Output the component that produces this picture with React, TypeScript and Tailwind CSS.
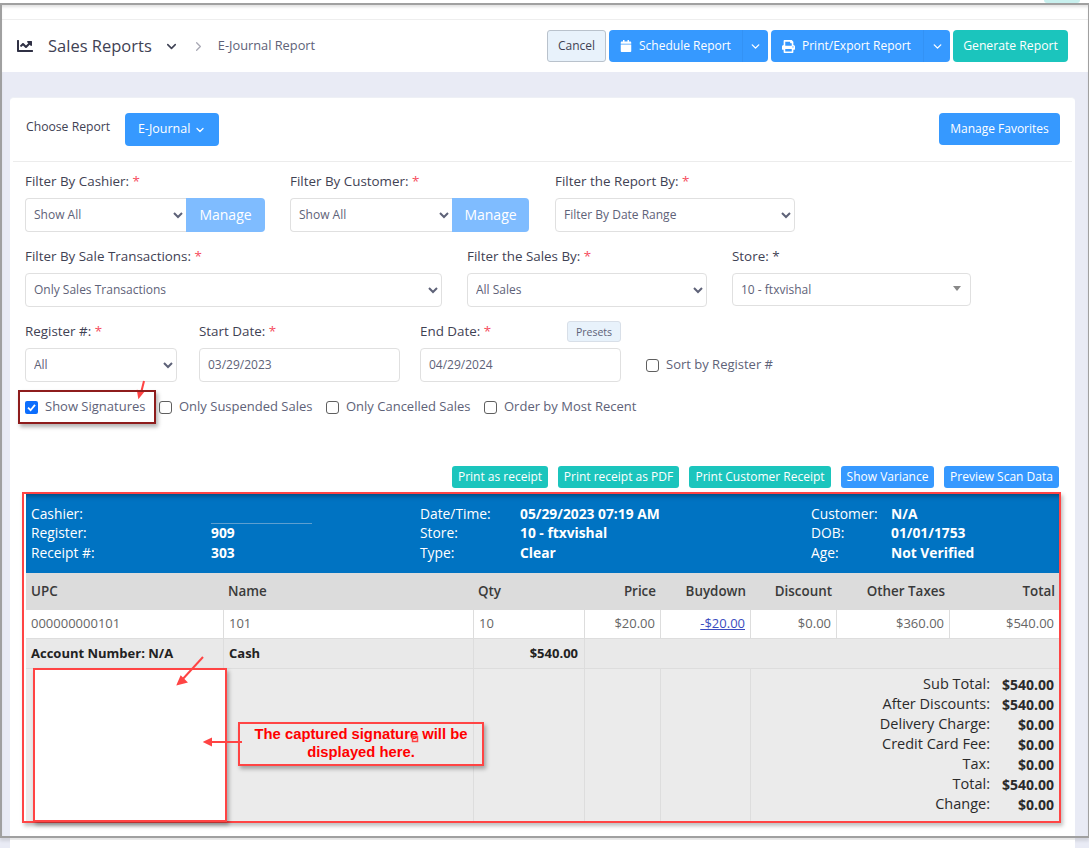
import React from "react";
import { FaChartLine, FaCalendar, FaPrint } from "react-icons/fa";
import { ChevronDown, ChevronRight } from "lucide-react";

const Req = () => <span className="text-[#f64e60]"> *</span>;

function Field({ label, required = true, className = "", children }: { label: string; required?: boolean; className?: string; children: React.ReactNode }) {
  return (
    <div className={className}>
      <div className="h-[18px] mb-[7px] text-[13.4px] leading-[16px] text-[#3f4254]">
        {label}
        {required ? <Req /> : <span> *</span>}
      </div>
      {children}
    </div>
  );
}

function Sel({ value, className = "" }: { value: string; className?: string }) {
  return (
    <select
      defaultValue={value}
      className={"h-[34px] pl-[4px] pb-[2px] border border-[#e0e0e0] bg-white text-[12px] text-[#5e6278] outline-none rounded-[4px] " + className}
    >
      <option>{value}</option>
    </select>
  );
}

function Check({ label, checked = false, className = "" }: { label: string; checked?: boolean; className?: string }) {
  return (
    <label className={"flex items-center gap-[7px] h-5 text-[13px] text-[#5e6278] " + className}>
      {checked ? (
        <span className="w-[13px] h-[13px] rounded-[2px] bg-[#0d6efd] flex items-center justify-center">
          <svg viewBox="0 0 12 12" className="w-[11px] h-[11px]">
            <path d="M2.2 6.2 L5 9 L9.8 3.2" fill="none" stroke="#fff" strokeWidth="2" />
          </svg>
        </span>
      ) : (
        <span className="w-[13px] h-[13px] rounded-[3px] bg-white border border-[#5f5f5f]" />
      )}
      {label}
    </label>
  );
}

function ActionBtn({ label, color, className }: { label: string; color: "teal" | "blue"; className: string }) {
  return (
    <div className={(color === "teal" ? "bg-[#1bc5bd] " : "bg-[#3699ff] ") + "h-[22px] rounded-[3px] flex items-center justify-center text-white text-[12px] " + className}>
      {label}
    </div>
  );
}

function SplitBtn({ icon, label, w, textW }: { icon: React.ReactNode; label: string; w: string; textW: string }) {
  return (
    <div className={"h-8 rounded-[4px] bg-[#3699ff] text-white flex items-center text-[12px] " + w}>
      <div className={"flex items-center gap-[7px] pl-[11px] " + textW}>
        {icon}
        <span>{label}</span>
      </div>
      <div className="flex-1 h-full border-l border-[#3392f5] flex items-center justify-center">
        <ChevronDown size={13} strokeWidth={2.5} />
      </div>
    </div>
  );
}

function InfoCol({ rows, className, keyW }: { rows: [string, string][]; className: string; keyW: string }) {
  return (
    <div className={"flex flex-col " + className}>
      {rows.map(([k, v]) => (
        <div key={k} className="flex h-[19.7px] items-center text-[13.8px] text-white">
          <span className={keyW}>{k}</span>
          <span className="font-bold">{v}</span>
        </div>
      ))}
    </div>
  );
}

const cols = "grid grid-cols-[197px_250px_111px_76px_90px_86px_113px_110px]";

const totals: [string, string][] = [
  ["Sub Total:", "$540.00"],
  ["After Discounts:", "$540.00"],
  ["Delivery Charge:", "$0.00"],
  ["Credit Card Fee:", "$0.00"],
  ["Tax:", "$0.00"],
  ["Total:", "$540.00"],
  ["Change:", "$0.00"],
];

export default function App() {
  return (
    <div className="relative w-[1089px] h-[848px] overflow-hidden bg-[#e9ebf5] font-['Open_Sans',sans-serif]">
      {/* top header */}
      <div className="bg-white h-[72px]">
        <div className="h-[20px] border-b border-[#eeeeee]" />
        <div className="h-[52px] pl-[17px] pr-[21px] flex items-center">
          <FaChartLine size={16} className="text-[#2f3044]" />
          <span className="ml-[15px] text-[16.5px] text-[#3f4254]">Sales Reports</span>
          <ChevronDown size={15} strokeWidth={2.5} className="ml-[12px] text-[#3f4254]" />
          <ChevronRight size={15} strokeWidth={2} className="ml-[12px] text-[#a8a8b4]" />
          <span className="ml-[12px] text-[12.8px] text-[#5e6278]">E-Journal Report</span>
          <div className="ml-auto flex gap-[3px]">
            <div className="w-[59px] h-8 rounded-[3px] border border-[#b9c2cc] bg-[#e8f2fb] text-[#3f4254] text-[12px] flex items-center justify-center">Cancel</div>
            <SplitBtn icon={<FaCalendar size={12} />} label="Schedule Report" w="w-[159px]" textW="w-[133px]" />
            <SplitBtn icon={<FaPrint size={13} />} label="Print/Export Report" w="w-[179px]" textW="w-[152px]" />
            <div className="w-[115px] h-8 rounded-[4px] bg-[#1bc5bd] text-white text-[12.2px] flex items-center justify-center">Generate Report</div>
          </div>
        </div>
      </div>

      {/* card */}
      <div className="ml-[10px] mt-[25px] w-[1065px] h-[760px] bg-white rounded-t-[4px] border-t border-[#eef0f5] px-[15px]">
        <div className="-mx-3 px-3 h-[64px] border-b border-[#ececec] flex items-start pt-[15px]">
          <span className="ml-[1px] mt-[5px] text-[12.2px] text-[#3f4254]">Choose Report</span>
          <div className="ml-[15px] w-[94px] h-[33px] rounded-[4px] bg-[#3699ff] text-white text-[12.5px] flex items-center justify-center gap-[4px]">
            E-Journal <ChevronDown size={12} strokeWidth={2.5} />
          </div>
          <div className="ml-auto w-[121px] h-8 rounded-[4px] bg-[#3699ff] text-white text-[12px] flex items-center justify-center">Manage Favorites</div>
        </div>

        <div className="pt-[11px] flex">
          <Field label="Filter By Cashier:" className="w-[265px]">
            <div className="flex w-[240px]">
              <Sel value="Show All" className="w-[161px] rounded-r-none border-r-0" />
              <div className="w-[79px] h-[34px] pb-[1px] rounded-r-[4px] bg-[#7fbcff] text-white text-[14px] font-medium flex items-center justify-center">Manage</div>
            </div>
          </Field>
          <Field label="Filter By Customer:" className="w-[265px]">
            <div className="flex w-[239px]">
              <Sel value="Show All" className="w-[162px] rounded-r-none border-r-0" />
              <div className="w-[77px] h-[34px] pb-[1px] rounded-r-[4px] bg-[#7fbcff] text-white text-[14px] font-medium flex items-center justify-center">Manage</div>
            </div>
          </Field>
          <Field label="Filter the Report By:">
            <Sel value="Filter By Date Range" className="w-[240px]" />
          </Field>
        </div>

        <div className="mt-[16px] flex">
          <Field label="Filter By Sale Transactions:" className="w-[442px]">
            <Sel value="Only Sales Transactions" className="w-[417px]" />
          </Field>
          <Field label="Filter the Sales By:" className="w-[265px]">
            <Sel value="All Sales" className="w-[240px]" />
          </Field>
          <Field label="Store:" required={false}>
            <div className="w-[239px] h-[33px] pl-[8px] pr-[9px] border border-[#e0e0e0] rounded-[4px] text-[12px] text-[#5e6278] flex items-center justify-between">
              <span>10 - ftxvishal</span>
              <span className="w-0 h-0 -mt-[3px] border-x-[4px] border-x-transparent border-t-[5px] border-t-[#888888]" />
            </div>
          </Field>
        </div>

        <div className="mt-[16px] flex">
          <Field label="Register #:" className="w-[174px]">
            <Sel value="All" className="w-[152px]" />
          </Field>
          <Field label="Start Date:" className="w-[221px]">
            <div className="w-[201px] h-[34px] pl-[8px] pb-[1px] border border-[#e0e0e0] rounded-[4px] text-[12px] text-[#5e6278] flex items-center">03/29/2023</div>
          </Field>
          <div className="w-[226px]">
            <div className="w-[201px] h-[18px] mb-[7px] flex justify-between text-[13.4px] leading-[16px] text-[#3f4254]">
              <span>End Date:<Req /></span>
              <span className="w-[54px] h-[21px] -mt-[2px] rounded-[3px] border border-[#d8dfe8] bg-[#e8f2fb] text-[10.5px] text-[#5e6278] flex items-center justify-center">Presets</span>
            </div>
            <div className="w-[201px] h-[34px] pl-[8px] pb-[1px] border border-[#e0e0e0] rounded-[4px] text-[12px] text-[#5e6278] flex items-center">04/29/2024</div>
          </div>
          <Check label="Sort by Register #" className="mt-[32px]" />
        </div>

        <div className="mt-[15px] flex">
          <Check label="Show Signatures" checked className="w-[134px]" />
          <Check label="Only Suspended Sales" className="w-[167px]" />
          <Check label="Only Cancelled Sales" className="w-[158px]" />
          <Check label="Order by Most Recent" />
        </div>

        <div className="mt-[49px] flex">
          <ActionBtn label="Print as receipt" color="teal" className="ml-[427px] w-[96px]" />
          <ActionBtn label="Print receipt as PDF" color="teal" className="ml-[10px] w-[121px]" />
          <ActionBtn label="Print Customer Receipt" color="teal" className="ml-[10px] w-[142px]" />
          <ActionBtn label="Show Variance" color="blue" className="ml-[10px] w-[93px]" />
          <ActionBtn label="Preview Scan Data" color="blue" className="ml-[10px] w-[115px]" />
        </div>

        {/* receipt */}
        <div className="relative mt-[4px] -ml-[3px] w-[1039px] h-[331px] border-2 border-[#ff4444] pl-[2px] shadow-[2px_3px_4px_rgba(0,0,0,0.25)]">
          <div className="h-[79px] bg-[#0073c2] shadow-[inset_0_5px_5px_-3px_rgba(0,0,0,0.35)] pt-[10px] pl-[5px] flex">
            <div className="relative w-[389px]">
              <InfoCol keyW="w-[180px]" className="" rows={[["Cashier:", ""], ["Register:", "909"], ["Receipt #:", "303"]]} />
              <div className="absolute left-[180px] top-[19px] w-[101px] h-px bg-[#5d9fd0]" />
            </div>
            <InfoCol keyW="w-[100px]" className="w-[391px]" rows={[["Date/Time:", "05/29/2023 07:19 AM"], ["Store:", "10 - ftxvishal"], ["Type:", "Clear"]]} />
            <InfoCol keyW="w-[80px]" className="" rows={[["Customer:", "N/A"], ["DOB:", "01/01/1753"], ["Age:", "Not Verified"]]} />
          </div>

          <div className={cols + " h-[37px] bg-[#dcdcdc] text-[13.4px] font-semibold text-[#3a3a3a] items-center"}>
            <div className="pl-[5px]">UPC</div>
            <div className="pl-[5px]">Name</div>
            <div className="pl-[5px]">Qty</div>
            <div className="text-right pr-[4px]">Price</div>
            <div className="text-right pr-[4px]">Buydown</div>
            <div className="text-right pr-[4px]">Discount</div>
            <div className="text-right pr-[4px]">Other Taxes</div>
            <div className="text-right pr-[4px]">Total</div>
          </div>

          <div className={cols + " h-[29px] bg-white text-[13px] text-[#666666] border-b border-[#dddddd]"}>
            <div className="pl-[5px] flex items-center">000000000101</div>
            <div className="pl-[5px] flex items-center border-l border-[#dddddd]">101</div>
            <div className="pl-[5px] flex items-center border-l border-[#dddddd]">10</div>
            <div className="flex items-center justify-end pr-[5px] col-start-4 border-l border-[#dddddd]">$20.00</div>
            <div className="flex items-center justify-end pr-[5px] border-l border-[#dddddd] text-[#3b4cc0] underline">-$20.00</div>
            <div className="flex items-center justify-end pr-[5px] border-l border-[#dddddd]">$0.00</div>
            <div className="flex items-center justify-end pr-[5px] border-l border-[#dddddd]">$360.00</div>
            <div className="flex items-center justify-end pr-[5px] border-l border-[#dddddd]">$540.00</div>
          </div>

          <div className={cols + " h-[30px] bg-[#e9e9e9] text-[13px] font-bold text-[#222222] border-b border-[#dddddd]"}>
            <div className="pl-[5px] flex items-center">Account Number: N/A</div>
            <div className="pl-[5px] flex items-center border-l border-[#dddddd]">Cash</div>
            <div className="pr-[6px] flex items-center justify-end border-l border-[#dddddd]">$540.00</div>
            <div className="col-span-5 border-l border-[#dddddd]" />
          </div>

          <div className={cols + " h-[152px] bg-[#ebebeb]"}>
            <div />
            <div className="border-l border-[#dddddd]" />
            <div className="border-l border-[#dddddd]" />
            <div className="border-l border-[#dddddd]" />
            <div className="border-l border-[#dddddd]" />
            <div className="col-span-3 border-l border-[#dddddd] pt-[5px] pr-[5px] text-[14.5px] text-[#2a2a2a]">
              {totals.map(([k, v]) => (
                <div key={k} className="flex justify-end h-[20px] items-center">
                  <span>{k}</span>
                  <span className="w-[64px] text-right text-[14px] font-bold">{v}</span>
                </div>
              ))}
            </div>
          </div>

          {/* signature annotation */}
          <div className="absolute left-[9px] top-[174px] w-[194px] h-[154px] bg-white border-2 border-[#ff4444] shadow-[2px_3px_4px_rgba(0,0,0,0.3)]" />
          <div className="absolute left-[214px] top-[228px] w-[246px] h-[44px] pt-[1px] border-2 border-[#ff4444] shadow-[2px_3px_4px_rgba(0,0,0,0.3)] font-['Liberation_Sans',sans-serif] text-[14.8px] leading-[18px] font-bold text-[#ff0000] text-center">
            The captured signature will be
            <br />
            displayed here.
          </div>
        </div>
      </div>

      {/* annotation arrows */}
      <svg className="absolute left-0 top-0 pointer-events-none" width="1089" height="848">
        <g stroke="#ff4444" strokeWidth="2" fill="#ff4444">
          <line x1="203" y1="657" x2="181" y2="681" />
          <path d="M178 684 L181 677 L186 682 Z" />
          <line x1="242" y1="742" x2="209" y2="742" />
          <path d="M205 742 L211 739 L211 745 Z" />
          <line x1="144" y1="381" x2="141" y2="393" />
          <path d="M139 397 L138 391 L143 392 Z" />
        </g>
        <rect x="412.5" y="736.5" width="5" height="5" fill="none" stroke="#ff4444" strokeWidth="1.5" />
      </svg>

      {/* show signatures highlight */}
      <div className="absolute left-[18px] top-[390px] w-[138px] h-[34px] border-2 border-[#8e1c1c] shadow-[2px_3px_4px_rgba(0,0,0,0.3)]" />

      {/* screenshot frame */}
      <div className="absolute left-0 top-0 w-[1089px] h-[3px] bg-white">
        <div className="absolute right-[9px] top-0 w-[36px] h-[3px] rounded-b-full bg-[#c8f0ee]" />
      </div>
      <div className="absolute left-0 top-[3px] w-[1089px] h-[835px] border-t-[2px] border-l-[2px] border-r-[1px] border-b-[2px] border-[#a0a0a0] shadow-[inset_0_3px_3px_-1px_rgba(0,0,0,0.12),0_3px_3px_rgba(0,0,0,0.1)]" />
      <div className="absolute left-[10px] top-[840px] w-[1065px] h-[8px] bg-white" />
    </div>
  );
}
